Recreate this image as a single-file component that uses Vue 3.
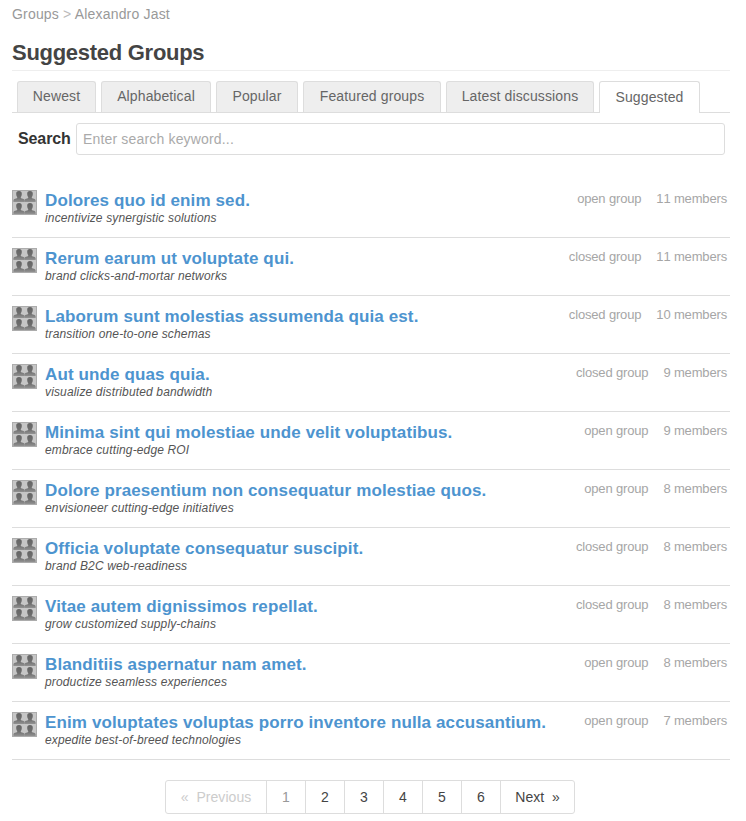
<script setup>
const tabs = [
  { label: 'Newest', width: 79 },
  { label: 'Alphabetical', width: 110 },
  { label: 'Popular', width: 82 },
  { label: 'Featured groups', width: 138 },
  { label: 'Latest discussions', width: 148 },
  { label: 'Suggested', width: 101, active: true },
]

const groups = [
  { name: 'Dolores quo id enim sed.', about: 'incentivize synergistic solutions', access: 'open', members: 11 },
  { name: 'Rerum earum ut voluptate qui.', about: 'brand clicks-and-mortar networks', access: 'closed', members: 11 },
  { name: 'Laborum sunt molestias assumenda quia est.', about: 'transition one-to-one schemas', access: 'closed', members: 10 },
  { name: 'Aut unde quas quia.', about: 'visualize distributed bandwidth', access: 'closed', members: 9 },
  { name: 'Minima sint qui molestiae unde velit voluptatibus.', about: 'embrace cutting-edge ROI', access: 'open', members: 9 },
  { name: 'Dolore praesentium non consequatur molestiae quos.', about: 'envisioneer cutting-edge initiatives', access: 'open', members: 8 },
  { name: 'Officia voluptate consequatur suscipit.', about: 'brand B2C web-readiness', access: 'closed', members: 8 },
  { name: 'Vitae autem dignissimos repellat.', about: 'grow customized supply-chains', access: 'closed', members: 8 },
  { name: 'Blanditiis aspernatur nam amet.', about: 'productize seamless experiences', access: 'open', members: 8 },
  { name: 'Enim voluptates voluptas porro inventore nulla accusantium.', about: 'expedite best-of-breed technologies', access: 'open', members: 7 },
]

const pages = [1, 2, 3, 4, 5, 6]
const people = [[0, 0], [11, 0], [0, 12], [11, 12]]
</script>

<template>
  <main class="page">
    <nav class="crumbs"><a>Groups</a> <span class="sep">&gt;</span> <a>Alexandro Jast</a></nav>
    <h1>Suggested Groups</h1>
    <ul class="tabs">
      <li v-for="t in tabs" :key="t.label" :class="{ active: t.active }" :style="{ width: t.width + 'px' }">{{ t.label }}</li>
    </ul>
    <form class="search">
      <label for="q">Search</label>
      <input id="q" type="text" placeholder="Enter search keyword..." />
    </form>
    <ul class="groups">
      <li v-for="g in groups" :key="g.name">
        <svg class="avatar" viewBox="0 0 25 25">
          <defs>
            <linearGradient id="body" x1="0" y1="0" x2="0" y2="1">
              <stop offset="0" stop-color="#646464" />
              <stop offset="0.6" stop-color="#6e6e6e" />
              <stop offset="1" stop-color="#929292" />
            </linearGradient>
          </defs>
          <rect width="25" height="25" fill="#c6c6c6" />
          <g v-for="p in people" :key="p.join()" :transform="`translate(${p[0]} ${p[1]})`">
            <path d="M7 1C5 1 4.200 2.100 4.200 3.700c0 1.500.4 2.600 1 3.300v1C4.200 8.900 1.700 8.500 1.400 10.200V12h11.200v-1.800c-.3-1.700-2.800-1.300-3.800-2.200V7c.6-.7 1-1.800 1-3.300C9.800 2.100 9 1 7 1z" fill="url(#body)" />
          </g>
          <rect x=".5" y=".5" width="24" height="24" fill="none" stroke="#acacac" />
        </svg>
        <div class="info">
          <h2>{{ g.name }}</h2>
          <p>{{ g.about }}</p>
        </div>
        <div class="meta"><span>{{ g.access }} group</span><span>{{ g.members }} members</span></div>
      </li>
    </ul>
    <nav class="pager">
      <a class="prev">«&nbsp; Previous</a>
      <a v-for="p in pages" :key="p" class="num" :class="{ current: p === 1 }">{{ p }}</a>
      <a class="next">Next&nbsp; »</a>
    </nav>
  </main>
</template>

<style>
body {
  background: #fff;
}
</style>

<style scoped>
* {
  box-sizing: border-box;
  margin: 0;
  padding: 0;
}
.page {
  width: 746px;
  height: 821px;
  padding: 4px 16px 0 12px;
  overflow: hidden;
  font: 14px/20px "Liberation Sans", Arial, sans-serif;
  color: #333;
}
ul {
  list-style: none;
}
.crumbs {
  height: 20px;
  color: #999;
  letter-spacing: 0.18px;
}
.sep {
  color: #bbb;
}
h1 {
  height: 47px;
  padding-top: 15px;
  border-bottom: 1px solid #eee;
  font-size: 22px;
  line-height: 28px;
  letter-spacing: -0.28px;
  color: #444;
}
.tabs {
  display: flex;
  gap: 5px;
  height: 42px;
  padding: 10px 5px 0;
  border-bottom: 1px solid #ddd;
}
.tabs li {
  height: 31px;
  border: 1px solid #ddd;
  border-bottom: 0;
  border-radius: 3px 3px 0 0;
  background: #eee;
  color: #666;
  line-height: 29px;
  letter-spacing: 0.12px;
  text-align: center;
  white-space: nowrap;
}
.tabs .active {
  height: 32px;
  background: #fff;
  line-height: 31px;
}
.search {
  display: flex;
  height: 67px;
  padding: 10px 5px 0 6px;
}
label {
  width: 58px;
  font-size: 16px;
  font-weight: bold;
  line-height: 31px;
  letter-spacing: -0.1px;
}
input {
  flex: 1;
  height: 32px;
  padding: 0 6px;
  border: 1px solid #ddd;
  border-radius: 3px;
  font: inherit;
  letter-spacing: 0.17px;
  outline: 0;
}
input::placeholder {
  color: #aaa;
}
.groups li {
  display: flex;
  height: 58px;
  padding-top: 10px;
  border-bottom: 1px solid #ddd;
}
.avatar {
  width: 25px;
  height: 25px;
  flex: none;
}
.info {
  flex: 1;
  padding: 1px 0 0 8px;
  white-space: nowrap;
}
h2 {
  font-size: 17px;
  line-height: 20px;
  letter-spacing: 0.12px;
  color: #4d94cf;
}
p {
  font-size: 12px;
  font-style: italic;
  line-height: 15px;
  letter-spacing: 0.15px;
  color: #555;
}
.meta {
  display: flex;
  gap: 15px;
  padding-right: 3px;
  color: #a6a6a6;
  font-size: 13px;
  font-kerning: none;
  line-height: 17px;
  letter-spacing: -0.16px;
}
.pager {
  display: flex;
  width: 410px;
  height: 34px;
  margin: 20px 0 0 153px;
  border: 1px solid #ddd;
  border-radius: 3px;
  color: #444;
  line-height: 32px;
  text-align: center;
}
.pager a + a {
  border-left: 1px solid #ddd;
}
.prev {
  width: 100px;
  color: #ccc;
  letter-spacing: 0.05px;
}
.num {
  width: 39px;
}
.current {
  color: #999;
}
.next {
  flex: 1;
}
</style>
